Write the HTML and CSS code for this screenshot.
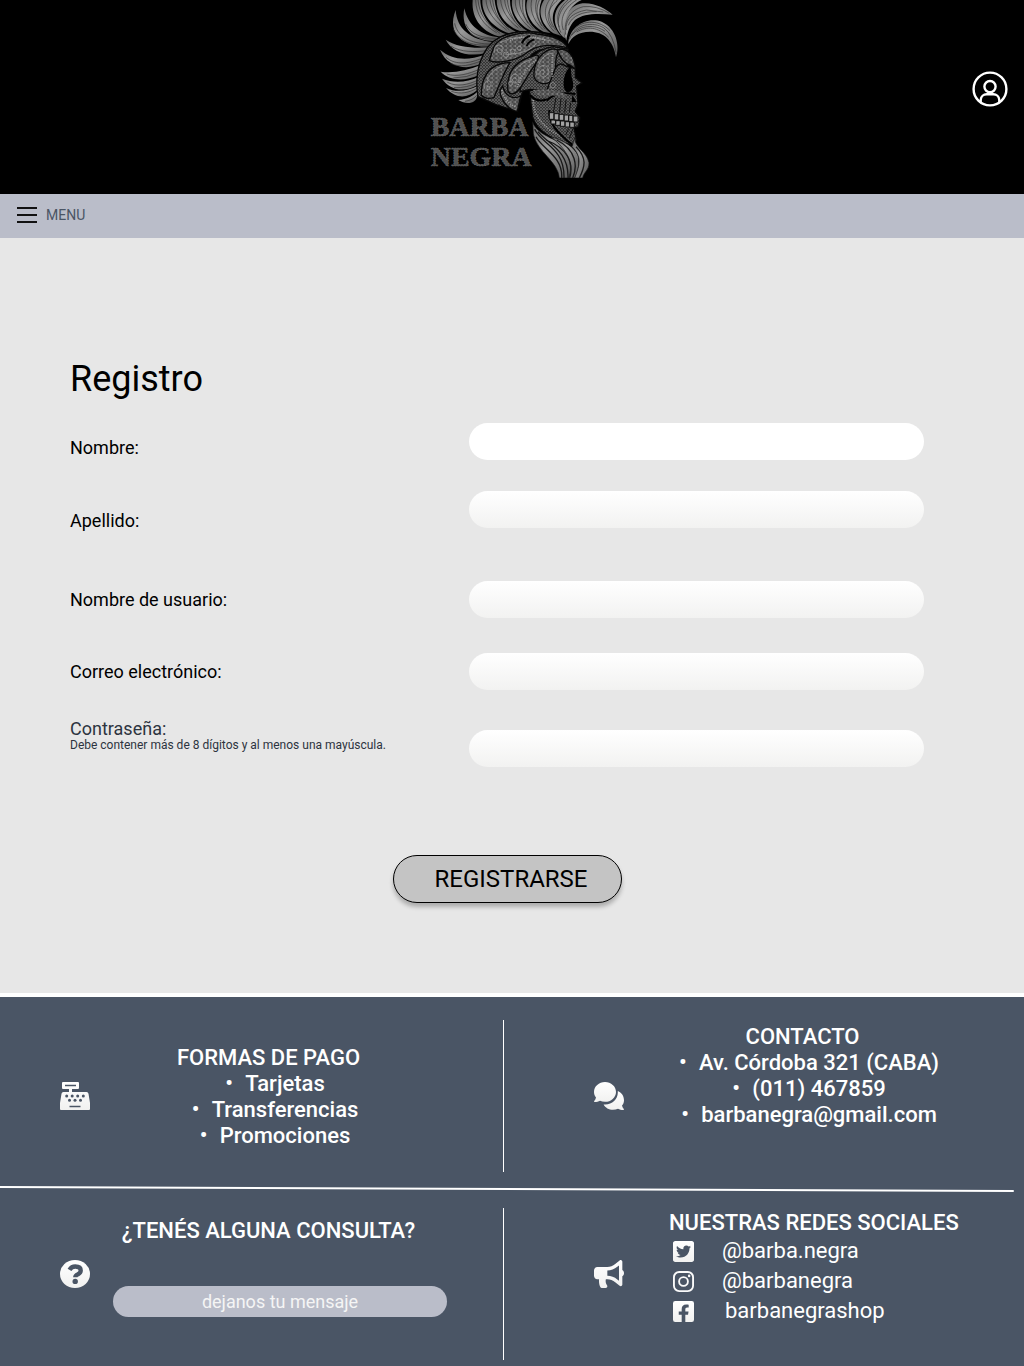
FILE: index.html
```html
<!DOCTYPE html>
<html lang="es">
<head>
<meta charset="utf-8">
<meta name="viewport" content="width=device-width, initial-scale=1">
<title>Barba Negra - Registro</title>
<link rel="stylesheet" href="styles.css">
</head>
<body>
<header class="header">
  <a class="brand" href="#" aria-label="Barba Negra">
    <svg class="brand-logo" viewBox="0 0 630 534">
      <defs>
        <linearGradient id="hair" x1="0" y1="0" x2="1" y2="1">
          <stop offset="0" stop-color="#666"/><stop offset=".4" stop-color="#999"/><stop offset="1" stop-color="#555"/>
        </linearGradient>
        <pattern id="dots" width="9" height="9" patternUnits="userSpaceOnUse">
          <rect width="9" height="9" fill="#333"/><circle cx="3" cy="3" r="2.3" fill="#8c8c8c"/><circle cx="8" cy="7" r="1.7" fill="#777"/>
        </pattern>
        <pattern id="lace" width="14" height="12" patternUnits="userSpaceOnUse">
          <rect width="14" height="12" fill="#686868"/><path d="M0 3q4-4 7 0t7 0M0 9q4 4 7 0t7 0" fill="none" stroke="#2c2c2c" stroke-width="2"/><circle cx="7" cy="6" r="2" fill="#999"/>
        </pattern>
      </defs>
      <g fill="url(#hair)">
        <path d="M445 132C446 80 500 48 545 65C590 85 600 140 588 172C580 120 550 95 510 95C475 95 455 110 445 132Z"/>
        <path d="M439 122C420 70 440 20 480 11C520 5 555 25 578 44C530 40 490 40 465 60C447 78 442 100 439 122Z"/>
        <path d="M430 112C395 75 395 30 435 0H485C442 20 430 60 435 114Z"/>
        <path d="M400 100C360 70 352 30 372 0H425C388 35 392 75 424 108Z"/>
        <path d="M370 95C330 75 312 30 322 0H365C350 40 360 75 392 100Z"/>
        <path d="M335 93C295 75 272 35 276 0H316C312 40 325 75 358 95Z"/>
        <path d="M300 93C258 80 230 40 230 0H270C270 40 290 75 322 93Z"/>
        <path d="M268 100C222 85 184 45 187 0H224C228 45 250 80 288 95Z"/>
        <path d="M242 110C192 100 153 60 158 0H181C182 50 215 90 258 102Z"/>
        <path d="M226 123C166 125 120 90 133 25C145 80 185 106 236 112Z"/>
        <path d="M209 139C145 145 75 110 107 30C110 85 150 120 220 126Z"/>
        <path d="M196 160C140 172 95 155 77 119C110 142 160 145 207 142Z"/>
        <path d="M184 190C140 214 80 200 60 149C95 179 140 184 193 164Z"/>
        <path d="M177 225C130 247 85 240 62 215C100 220 140 213 183 195Z"/>
        <path d="M173 254C130 280 90 270 66 236C100 250 140 248 177 230Z"/>
        <path d="M172 270C140 298 105 295 78 264C110 278 140 274 174 257Z"/>
        <path d="M172 284C170 312 140 315 115 300C140 298 160 288 172 275Z"/>
      </g>
      <g fill="none" stroke="#303030" stroke-width="2">
        <path d="M448 118C465 70 520 64 552 84Q580 105 588 158M455 106C480 74 525 72 555 94M470 96C500 78 535 80 566 112M462 88C490 58 540 60 570 92"/>
        <path d="M437 104C430 62 450 30 490 20Q530 16 568 40M439 90C435 60 456 38 500 30L550 36M445 76C456 46 490 34 530 35"/>
        <path d="M423 98C404 62 420 22 455 0M430 90C416 52 440 18 470 0M418 82C404 50 420 20 444 0"/>
        <path d="M402 94C368 58 372 24 388 0M407 90C380 52 386 24 402 0M398 82C372 50 386 24 413 0"/>
        <path d="M369 89C334 56 330 24 335 0M375 88C344 50 344 24 350 0M365 78C345 44 350 18 358 0"/>
        <path d="M332 86C298 58 284 24 286 0M340 86C308 52 298 24 298 0M324 70C304 38 308 18 308 0"/>
        <path d="M295 84C262 60 244 28 242 0M303 84C270 52 256 28 254 0M285 65C268 38 264 18 262 0"/>
        <path d="M260 90C222 62 200 34 198 0M268 90C232 58 214 32 210 0M250 73C226 46 220 18 218 0"/>
        <path d="M230 98C190 76 168 42 167 0M240 100C198 72 178 42 174 0M150 100C170 116 200 118 226 117M137 72C152 106 190 114 228 115"/>
        <path d="M104 70C114 118 165 132 212 132M100 88C122 130 165 138 208 135M92 138C124 158 164 156 200 152M78 172C108 198 150 190 188 174M92 190C120 204 150 196 186 182"/>
        <path d="M80 222C112 232 146 222 180 207M100 234Q140 234 178 216M82 247C112 262 146 254 174 240M102 263Q142 264 172 248M94 274C122 284 148 278 172 264M135 304Q160 300 170 286"/>
      </g>
      <g stroke="#080808" stroke-width="4">
        <path fill="url(#dots)" d="M174 290C162 220 182 142 238 112C300 82 412 92 443 145L360 150C320 160 300 220 308 272L294 335L228 314Z"/>
        <path fill="url(#lace)" d="M218 150C228 108 306 92 350 102C400 106 434 124 442 143C380 130 350 136 320 158C280 190 220 188 208 182Z"/>
        <path fill="url(#lace)" d="M184 286C184 240 200 205 240 192Q258 188 270 188C250 220 232 270 222 292Q198 300 184 286Z"/>
        <path fill="url(#dots)" d="M300 275C300 200 335 150 400 140L445 148L440 215L400 272L330 268Z"/>
        <path fill="url(#lace)" d="M264 274C258 218 282 184 340 168C370 156 350 188 330 216C310 250 290 290 270 280Z"/>
        <path fill="url(#lace)" d="M342 230C340 190 360 160 390 148Q416 144 414 158C400 180 415 210 398 240C380 258 348 252 342 230Z"/>
        <path fill="url(#lace)" d="M240 272C240 296 264 330 292 334L302 288C280 300 256 290 248 258Z"/>
        <path fill="url(#dots)" d="M404 210Q416 180 440 200L466 206V232L486 249L470 258L474 312L466 335L480 352L476 380L462 383L469 420L461 438C405 424 352 396 338 352L328 270L380 272Z"/>
        <path fill="url(#lace)" d="M412 150C442 140 464 168 466 208L452 196C430 190 420 172 412 150Z"/>
      </g>
      <g fill="none" stroke="#a0a0a0" stroke-width="2">
        <path d="M224 158q-4-22 15-23q16 4 7 20q-12 9-14-5q4-8 10-3M350 226q-2-25 19-30q20 2 15 26q-12 18-24 2q-2-16 11-14q6 8-3 12M356 194q14-32 42-35M272 244q-2-20 15-22q15 5 8 22q-14 13-18-5q7-11 13-1M286 210q20-24 50-32M194 266q-4-24 13-24q12 9 1 20M202 240q16-36 45-40M240 128q50-30 155-5M260 164q70-4 90-35"/>
        <path stroke-width="5" stroke-dasharray="3 4" d="M398 165Q395 190 397 230M246 270Q254 306 285 320M270 122Q315 100 375 120M292 262Q310 205 350 180M340 300Q338 350 390 390L450 425"/>
        <circle cx="398" cy="256" r="8"/><circle cx="258" cy="164" r="8"/><circle cx="278" cy="154" r="7"/><circle cx="298" cy="145" r="6"/><circle cx="272" cy="250" r="6"/><circle cx="205" cy="264" r="5"/>
      </g>
      <path fill="#000" d="M452 202C432 208 423 265 440 276C464 280 462 250 455 232ZM457 284L469 306L455 306ZM310 278L327 292L333 365L312 330L294 335Z"/>
      <path fill="none" stroke="#000" stroke-width="6" d="M306 130q8-20 25-22M320 138q5-14 23-20M330 285q20 24 50 13M380 302Q408 272 466 282M388 330Q382 380 460 436"/>
      <path fill="url(#lace)" d="M338 270Q390 262 440 283L438 296Q400 280 380 290Q350 292 338 270Z"/>
      <path fill="none" stroke="#111" stroke-width="3" d="M408 293L400 338M423 295L418 338M438 299L434 338M452 308L448 338M460 383L448 415M446 386L437 405"/>
      <path fill="#a2a2a2" stroke="#101010" stroke-width="3" d="M388 338h14v20h-14zM402 341h15v19h-15zM417 343h15v18h-15zM432 345h14v18h-14zM446 346h13v19h-13zM459 348h15v18h-15zM393 360h14v12h-14zM407 362h14v14h-14zM421 363h14v16h-14zM435 365h14v16h-14zM449 366h14v16h-14z"/>
      <g fill="url(#hair)" stroke="#111" stroke-width="2">
        <path d="M338 365C350 410 430 420 449 452C468 485 458 510 456 534H418C415 485 350 455 340 402Z"/>
        <path d="M392 410C430 420 465 442 475 468C480 500 470 520 466 534H446C460 495 448 453 392 410Z"/>
        <path d="M464 414C465 445 500 454 507 488C508 510 491 516 488 534H464C480 494 486 470 456 440Z"/>
      </g>
      <path fill="none" stroke="#181818" stroke-width="4" d="M344 388C366 435 434 442 432 534M354 395C380 430 447 450 444 534M378 420C440 444 463 486 449 534M410 420C470 450 473 500 458 534M468 440C502 474 495 500 478 534M348 410C365 445 430 470 425 534"/>
      <g class="brand-name"><text x="32" y="409">BARBA</text><text x="32" y="499">NEGRA</text></g>
    </svg>
  </a>
  <a class="account" href="#" aria-label="Mi cuenta">
    <svg viewBox="0 0 36 36" fill="none" stroke="#fff" stroke-width="2.4"><circle cx="18" cy="18" r="16.4"/><circle cx="18" cy="15.6" r="5.6"/><path d="M8.700 31v-2.200a6 6 0 0 1 6-5.600h6.600a6 6 0 0 1 6 5.600V31"/></svg>
  </a>
</header>
<nav class="menu-bar">
  <button class="menu-button" type="button">
    <svg viewBox="0 0 20 16" stroke="#111" stroke-width="2"><path d="M0 1h20M0 8h20M0 15h20"/></svg>
    <span>MENU</span>
  </button>
</nav>
<main class="main">
  <form class="form">
    <h1 class="title">Registro</h1>
    <div class="field field-low"><label for="nombre">Nombre:</label><input class="plain" id="nombre" type="text"></div>
    <div class="field field-drop"><label for="apellido">Apellido:</label><input id="apellido" type="text"></div>
    <div class="field field-far"><label for="usuario">Nombre de usuario:</label><input id="usuario" type="text"></div>
    <div class="field field-mid"><label for="correo">Correo electrónico:</label><input id="correo" type="email"></div>
    <div class="field field-hint"><label for="clave">Contraseña:<small>Debe contener más de 8 dígitos y al menos una mayúscula.</small></label><input id="clave" type="password"></div>
    <div class="actions"><button class="submit" type="submit">REGISTRARSE</button></div>
  </form>
</main>
<footer class="footer">
  <svg class="defs" width="0" height="0" aria-hidden="true"><defs><linearGradient id="w" x1="0" y1="0" x2="0" y2="1"><stop offset="0" stop-color="#fff"/><stop offset="1" stop-color="#f1f1f0"/></linearGradient></defs></svg>
  <div class="row row-info">
    <section class="cell cell-left">
      <svg class="icon" viewBox="0 0 30 28"><path fill="url(#w)" fill-rule="evenodd" d="M3 0h15a1 1 0 0 1 1 1v5a1 1 0 0 1-1 1h-6v3h14.500a2 2 0 0 1 2 1.700L30 21v6a1 1 0 0 1-1 1H1a1 1 0 0 1-1-1v-6l1.500-9.300a2 2 0 0 1 2-1.700H9V7H3a1 1 0 0 1-1-1V1a1 1 0 0 1 1-1zM5 2.700v1.500h11V2.700zM9.500 23.700v1.600h11v-1.600z"/><g fill="#4a5565"><circle cx="6.700" cy="14" r="1.500"/><circle cx="12.200" cy="14" r="1.500"/><circle cx="17.700" cy="14" r="1.500"/><circle cx="23.300" cy="14" r="1.500"/><circle cx="9.500" cy="18.300" r="1.500"/><circle cx="15" cy="18.300" r="1.500"/><circle cx="20.500" cy="18.300" r="1.500"/></g></svg>
      <div class="text text-pay"><h2>FORMAS DE PAGO</h2><ul class="bullets"><li>Tarjetas</li><li>Transferencias</li><li>Promociones</li></ul></div>
    </section>
    <section class="cell cell-right">
      <svg class="icon" viewBox="0 0 30 28" fill="url(#w)"><path d="M11 0c6 0 11 4.400 11 9.900s-5 9.900-11 9.900c-1.800 0-3.500-.4-5-1.100-1.500.8-3.300 1.300-5.400 1.300-.6 0-.8-.6-.4-1 .9-1 1.500-2.200 1.800-3.600C.7 13.800 0 11.900 0 9.900 0 4.400 5 0 11 0z"/><path d="M23.800 9c3.700 1.500 6.200 5 6.200 9.200 0 2-.7 3.900-2 5.400.3 1.400.9 2.600 1.800 3.500.4.400.2.900-.4.900-2.100 0-3.900-.5-5.400-1.300-1.500.7-3.200 1.100-5 1.100-4.100 0-7.700-2.200-9.400-5.400 7.600 1 14.200-4.700 14.200-11.600z"/></svg>
      <div class="text text-top"><h2>CONTACTO</h2><ul class="bullets"><li>Av. Córdoba 321 (CABA)</li><li>(011) 467859</li><li>barbanegra@gmail.com</li></ul></div>
    </section>
  </div>
  <svg class="rule" viewBox="0 0 1000 6" preserveAspectRatio="none" stroke="#fff" stroke-width="2"><path d="M0 1L1000 5"/></svg>
  <div class="row row-social">
    <section class="cell cell-left">
      <svg class="icon" viewBox="0 0 30 28"><ellipse cx="15" cy="14" rx="15" ry="14" fill="url(#w)"/><path d="M9.500 9.800Q11.500 6.500 15.300 6.500Q20.700 6.500 20.700 10.500Q20.700 12.800 18 14.200Q15.300 15.400 15.300 17.200" fill="none" stroke="#4a5565" stroke-width="4.400"/><circle cx="15.200" cy="21.400" r="2.700" fill="#4a5565"/></svg>
      <div class="text text-query"><h2><label for="mensaje">¿TENÉS ALGUNA CONSULTA?</label></h2><input class="message" id="mensaje" type="text" placeholder="dejanos tu mensaje"></div>
    </section>
    <section class="cell cell-right">
      <svg class="icon" viewBox="0 0 576 512" preserveAspectRatio="none"><path fill="url(#w)" d="M576 240c0-23.630-12.950-44.040-32-55.120V32.010C544 23.260 537.020 0 512 0c-7.120 0-14.190 2.380-19.980 7.020l-85.030 68.030C364.280 109.190 310.660 128 256 128H64c-35.350 0-64 28.650-64 64v96c0 35.350 28.650 64 64 64h33.700c-1.390 10.480-2.180 21.140-2.180 32 0 39.770 9.260 77.350 25.560 110.940 5.190 10.690 16.520 17.060 28.400 17.060h74.280c26.050 0 41.690-29.840 25.900-50.560-16.400-21.520-26.150-48.360-26.150-77.440 0-11.110 1.620-21.790 4.410-32H256c54.660 0 108.280 18.810 150.980 52.950l85.030 68.030a32.023 32.023 0 0 0 19.980 7.020c24.920 0 32-22.780 32-32V295.130C563.050 284.040 576 263.630 576 240zm-96 141.420l-33.050-26.440C392.950 311.780 325.120 288 256 288v-96c69.120 0 136.950-23.780 190.950-66.980L480 98.580v282.840z"/></svg>
      <div class="text text-top social">
        <h2>NUESTRAS REDES SOCIALES</h2>
        <ul>
          <li><a href="#"><svg viewBox="0 32 448 448"><path fill="url(#w)" d="M400 32H48C21.500 32 0 53.500 0 80v352c0 26.500 21.500 48 48 48h352c26.500 0 48-21.500 48-48V80c0-26.500-21.500-48-48-48zm-48.900 158.800c.2 2.800.2 5.700.2 8.500 0 86.700-66 186.600-186.600 186.600-37.200 0-71.700-10.800-100.700-29.400 5.300.6 10.400.8 15.800.8 30.700 0 58.900-10.400 81.400-28-28.800-.6-53-19.500-61.300-45.500 10.100 1.500 19.200 1.500 29.600-1.200-30-6.100-52.500-32.500-52.500-64.400v-.8c8.700 4.900 18.900 7.900 29.600 8.300a65.447 65.447 0 0 1-29.200-54.600c0-12.200 3.200-23.400 8.900-33.100 32.300 39.800 80.800 65.800 135.200 68.600-9.300-44.500 24-80.600 64-80.600 18.900 0 35.900 7.900 47.900 20.700 14.800-2.800 29-8.300 41.600-15.800-4.900 15.200-15.200 28-28.800 36.100 13.200-1.400 26-5.100 37.800-10.200-8.900 13.100-20.100 24.700-32.900 34z"/></svg><span>@barba.negra</span></a></li>
          <li><a href="#"><svg viewBox="0 32 448 448" fill="none" stroke="#fafafa"><rect x="20" y="52" width="408" height="408" rx="112" stroke-width="40"/><circle cx="224" cy="256" r="94" stroke-width="40"/><circle cx="344" cy="136" r="27" fill="#fafafa" stroke="none"/></svg><span>@barbanegra</span></a></li>
          <li><a class="shop" href="#"><svg viewBox="0 32 448 448"><path fill="url(#w)" d="M400 32H48A48 48 0 0 0 0 80v352a48 48 0 0 0 48 48h137.250V327.690h-63V256h63v-54.640c0-62.150 37-96.480 93.670-96.480 27.140 0 55.520 4.840 55.520 4.840v61h-31.270c-30.810 0-40.420 19.120-40.420 38.730V256h68.780l-11 71.690h-57.780V480H400a48 48 0 0 0 48-48V80a48 48 0 0 0-48-48z"/></svg><span>barbanegrashop</span></a></li>
        </ul>
      </div>
    </section>
  </div>
</footer>
</body>
</html>
```
FILE: styles.css
```css
* { box-sizing: border-box; }
body { margin: 0; background: #e7e7e7; color: #000; font-family: Roboto, "Liberation Sans", sans-serif; }
h1, h2, ul { margin: 0; padding: 0; }
h1, h2 { font-weight: 400; }
ul { list-style: none; }
svg { display: block; }
a { color: inherit; text-decoration: none; }
button, input { font: inherit; }

.header { display: grid; grid-template-columns: 1fr auto 1fr; padding: 0 16px 16px 42px; background: #000; }
.brand { grid-column: 2; }
.brand-logo { width: 210px; height: 178px; }
.brand-name { fill: #505050; stroke: #707070; stroke-width: 2px; stroke-dasharray: 5 3; font-family: "Liberation Serif", serif; font-weight: 700; font-size: 84px; }
.account { justify-self: end; align-self: center; }
.account svg { width: 36px; height: 36px; }

.menu-bar { display: flex; align-items: center; min-height: 44px; padding: 0 17px 2px; background: #babdc9; }
.menu-button { display: flex; align-items: center; gap: 9px; padding: 0; border: 0; background: none; color: #4a5565; font-size: 14px; line-height: 24px; cursor: pointer; }
.menu-button svg { width: 20px; height: 16px; }

.main { padding: 120px 0 90px; border-bottom: 4px solid #fff; }
.title { padding: 0 70px; font-size: 36px; line-height: 42px; }
.field { display: grid; grid-template-columns: 7fr 8fr; align-items: center; margin: 0 100px 0 70px; font-size: 18px; line-height: 24px; }
.field input { width: 100%; height: 37px; padding: 0 18px; border: 0; border-radius: 19px; background: linear-gradient(#fff, #f2f2f1); }
.field .plain { background: #fff; }
.field-low { margin-top: 23px; align-items: end; }
.field-drop { margin-top: 31px; min-height: 42px; align-items: end; }
.field-drop input { align-self: start; }
.field-far { margin-top: 48px; }
.field-mid { margin-top: 35px; }
.field-hint { margin-top: 29px; min-height: 48px; align-items: end; }
.field-hint label { align-self: start; color: #2d3440; line-height: 20px; }
.field-hint small { display: block; font-size: 12px; line-height: 12px; }
.actions { display: flex; justify-content: center; margin-top: 88px; padding-right: 10px; }
.submit { width: 229px; height: 48px; padding: 0 0 0 8px; border: 1px solid #000; border-radius: 24px; background: #c4c4c4; color: #000; font-size: 24px; line-height: 28px; box-shadow: 0 4px 4px rgba(0, 0, 0, .25); cursor: pointer; }

.footer { background: #4a5565; color: #fff; font-size: 22px; line-height: 26px; }
.defs { position: absolute; }
.row { display: grid; grid-template-columns: 63fr 65fr; }
.row-info { padding: 23px 0 14px; }
.row-social { padding: 16px 0 6px; }
.cell { display: flex; align-items: center; min-height: 152px; }
.row-social .cell { padding-bottom: 20px; }
.cell-left { padding-left: 60px; padding-right: 56px; border-right: 1px solid #fff; }
.cell-right { padding-left: 90px; padding-right: 43px; }
.icon { flex: none; width: 30px; height: 28px; }
.text { flex: 1; text-align: center; }
.text h2 { font-size: 22px; line-height: 26px; font-weight: 500; }
.text-pay { padding-top: 2px; }
.text-top { align-self: start; padding-top: 4px; }
.bullets { padding-left: 33px; font-weight: 500; }
.bullets li::before { content: "•"; display: inline-block; width: 20px; margin-left: -20px; text-align: left; }
.rule { width: 99%; height: 6px; }
.text-query { align-self: start; padding-top: 10px; }
.message { display: block; width: calc(100% - 23px); height: 31px; margin: 42px 0 0 23px; padding: 0 16px; border: 0; border-radius: 16px; background: #babdc9; color: #f5f5f5; font-size: 18px; text-align: center; }
.message::placeholder { color: #f5f5f5; opacity: 1; }
.social { padding: 2px 0 0 45px; text-align: left; }
.social a { display: flex; align-items: center; gap: 28px; margin-left: 4px; line-height: 30px; }
.social .shop { gap: 31px; }
.social a svg { width: 21px; height: 21px; }
```
